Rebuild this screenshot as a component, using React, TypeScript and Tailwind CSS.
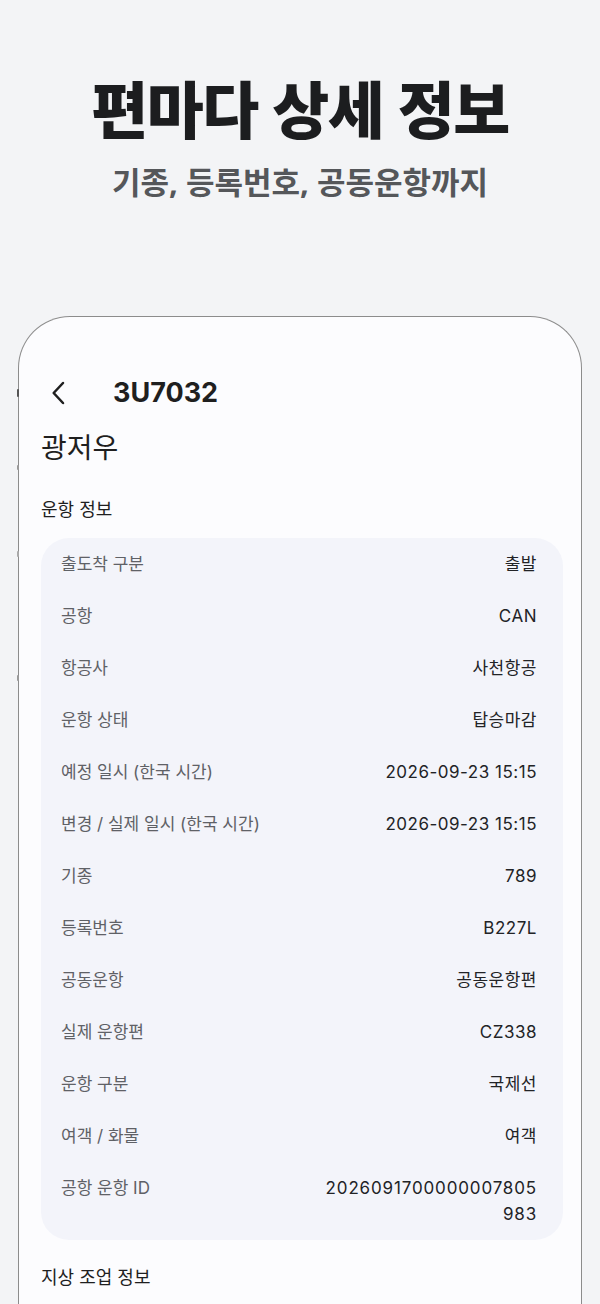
import React from "react";

const rows: [string, string][] = [
  ["출도착 구분", "출발"],
  ["공항", "CAN"],
  ["항공사", "사천항공"],
  ["운항 상태", "탑승마감"],
  ["예정 일시 (한국 시간)", "2026-09-23 15:15"],
  ["변경 / 실제 일시 (한국 시간)", "2026-09-23 15:15"],
  ["기종", "789"],
  ["등록번호", "B227L"],
  ["공동운항", "공동운항편"],
  ["실제 운항편", "CZ338"],
  ["운항 구분", "국제선"],
  ["여객 / 화물", "여객"],
];

export default function App() {
  const font = { fontFamily: 'Inter, "Noto Sans CJK KR", sans-serif' };
  const titleFont = { fontFamily: '"Noto Sans", "Noto Sans CJK KR", sans-serif' };
  return (
    <div className="w-[600px] h-[1304px] overflow-hidden bg-[#f3f4f6]" style={font}>
      <div className="flex flex-col items-center pt-[68px]" style={titleFont}>
        <h1 className="text-[62px] leading-[84px] font-black tracking-[-0.025em] text-[#1c1d1f]">
          편마다 상세 정보
        </h1>
        <p className="mt-[10px] text-[31px] leading-[40px] font-bold tracking-[0em] text-[#55575a]">
          기종, 등록번호, 공동운항까지
        </p>
      </div>
      <div className="relative mt-[114px] mx-[18px] h-[1100px] rounded-t-[52px] border-[1.5px] border-b-0 border-[#8c8c8c] bg-[#fcfcfe] pl-[22px] pr-[18px]">
        <div className="absolute left-[-2px] top-[72px] h-[8px] w-[2px] rounded-full bg-[#555]" />
        <div className="absolute left-[-2px] top-[148px] h-[5px] w-[2px] rounded-full bg-[#999]" />
        <div className="absolute left-[-2px] top-[234px] h-[6px] w-[2px] rounded-full bg-[#aaa]" />
        <div className="absolute left-[-2px] top-[358px] h-[6px] w-[2px] rounded-full bg-[#999]" />
        <div className="flex items-center h-[40px] mt-[56px]">
          <svg width="32" height="32" viewBox="0 0 24 24" fill="none" stroke="#1f1f1f" strokeWidth="1.9" strokeLinecap="round" strokeLinejoin="round" className="ml-[2px]">
            <path d="M15 4.5 8 12l7 7.5" />
          </svg>
          <span className="ml-[38px] text-[27px] font-bold text-[#1f1f1f]">3U7032</span>
        </div>
        <div className="mt-[15px] text-[28px] leading-[40px] text-[#1f1f1f]">광저우</div>
        <div className="mt-[28px] text-[18px] leading-[28px] text-[#1f1f1f]">운항 정보</div>
        <div className="mt-[14px] rounded-[28px] bg-[#f3f4fa] pl-[20px] pr-[26px]">
          {rows.map(([k, v]) => (
            <div key={k} className="flex justify-between py-[13px] text-[17px] leading-[26px]">
              <span className="text-[#5f6166]">{k}</span>
              <span className="text-[#222326] tracking-[0.03em]">{v}</span>
            </div>
          ))}
          <div className="flex justify-between py-[13px] text-[17px] leading-[26px]">
            <span className="text-[#5f6166]">공항 운항 ID</span>
            <span className="text-[#222326] text-right tracking-[0.05em]">
              2026091700000007805
              <br />
              983
            </span>
          </div>
        </div>
        <div className="mt-[24px] text-[18px] leading-[28px] text-[#1f1f1f]">지상 조업 정보</div>
      </div>
    </div>
  );
}
